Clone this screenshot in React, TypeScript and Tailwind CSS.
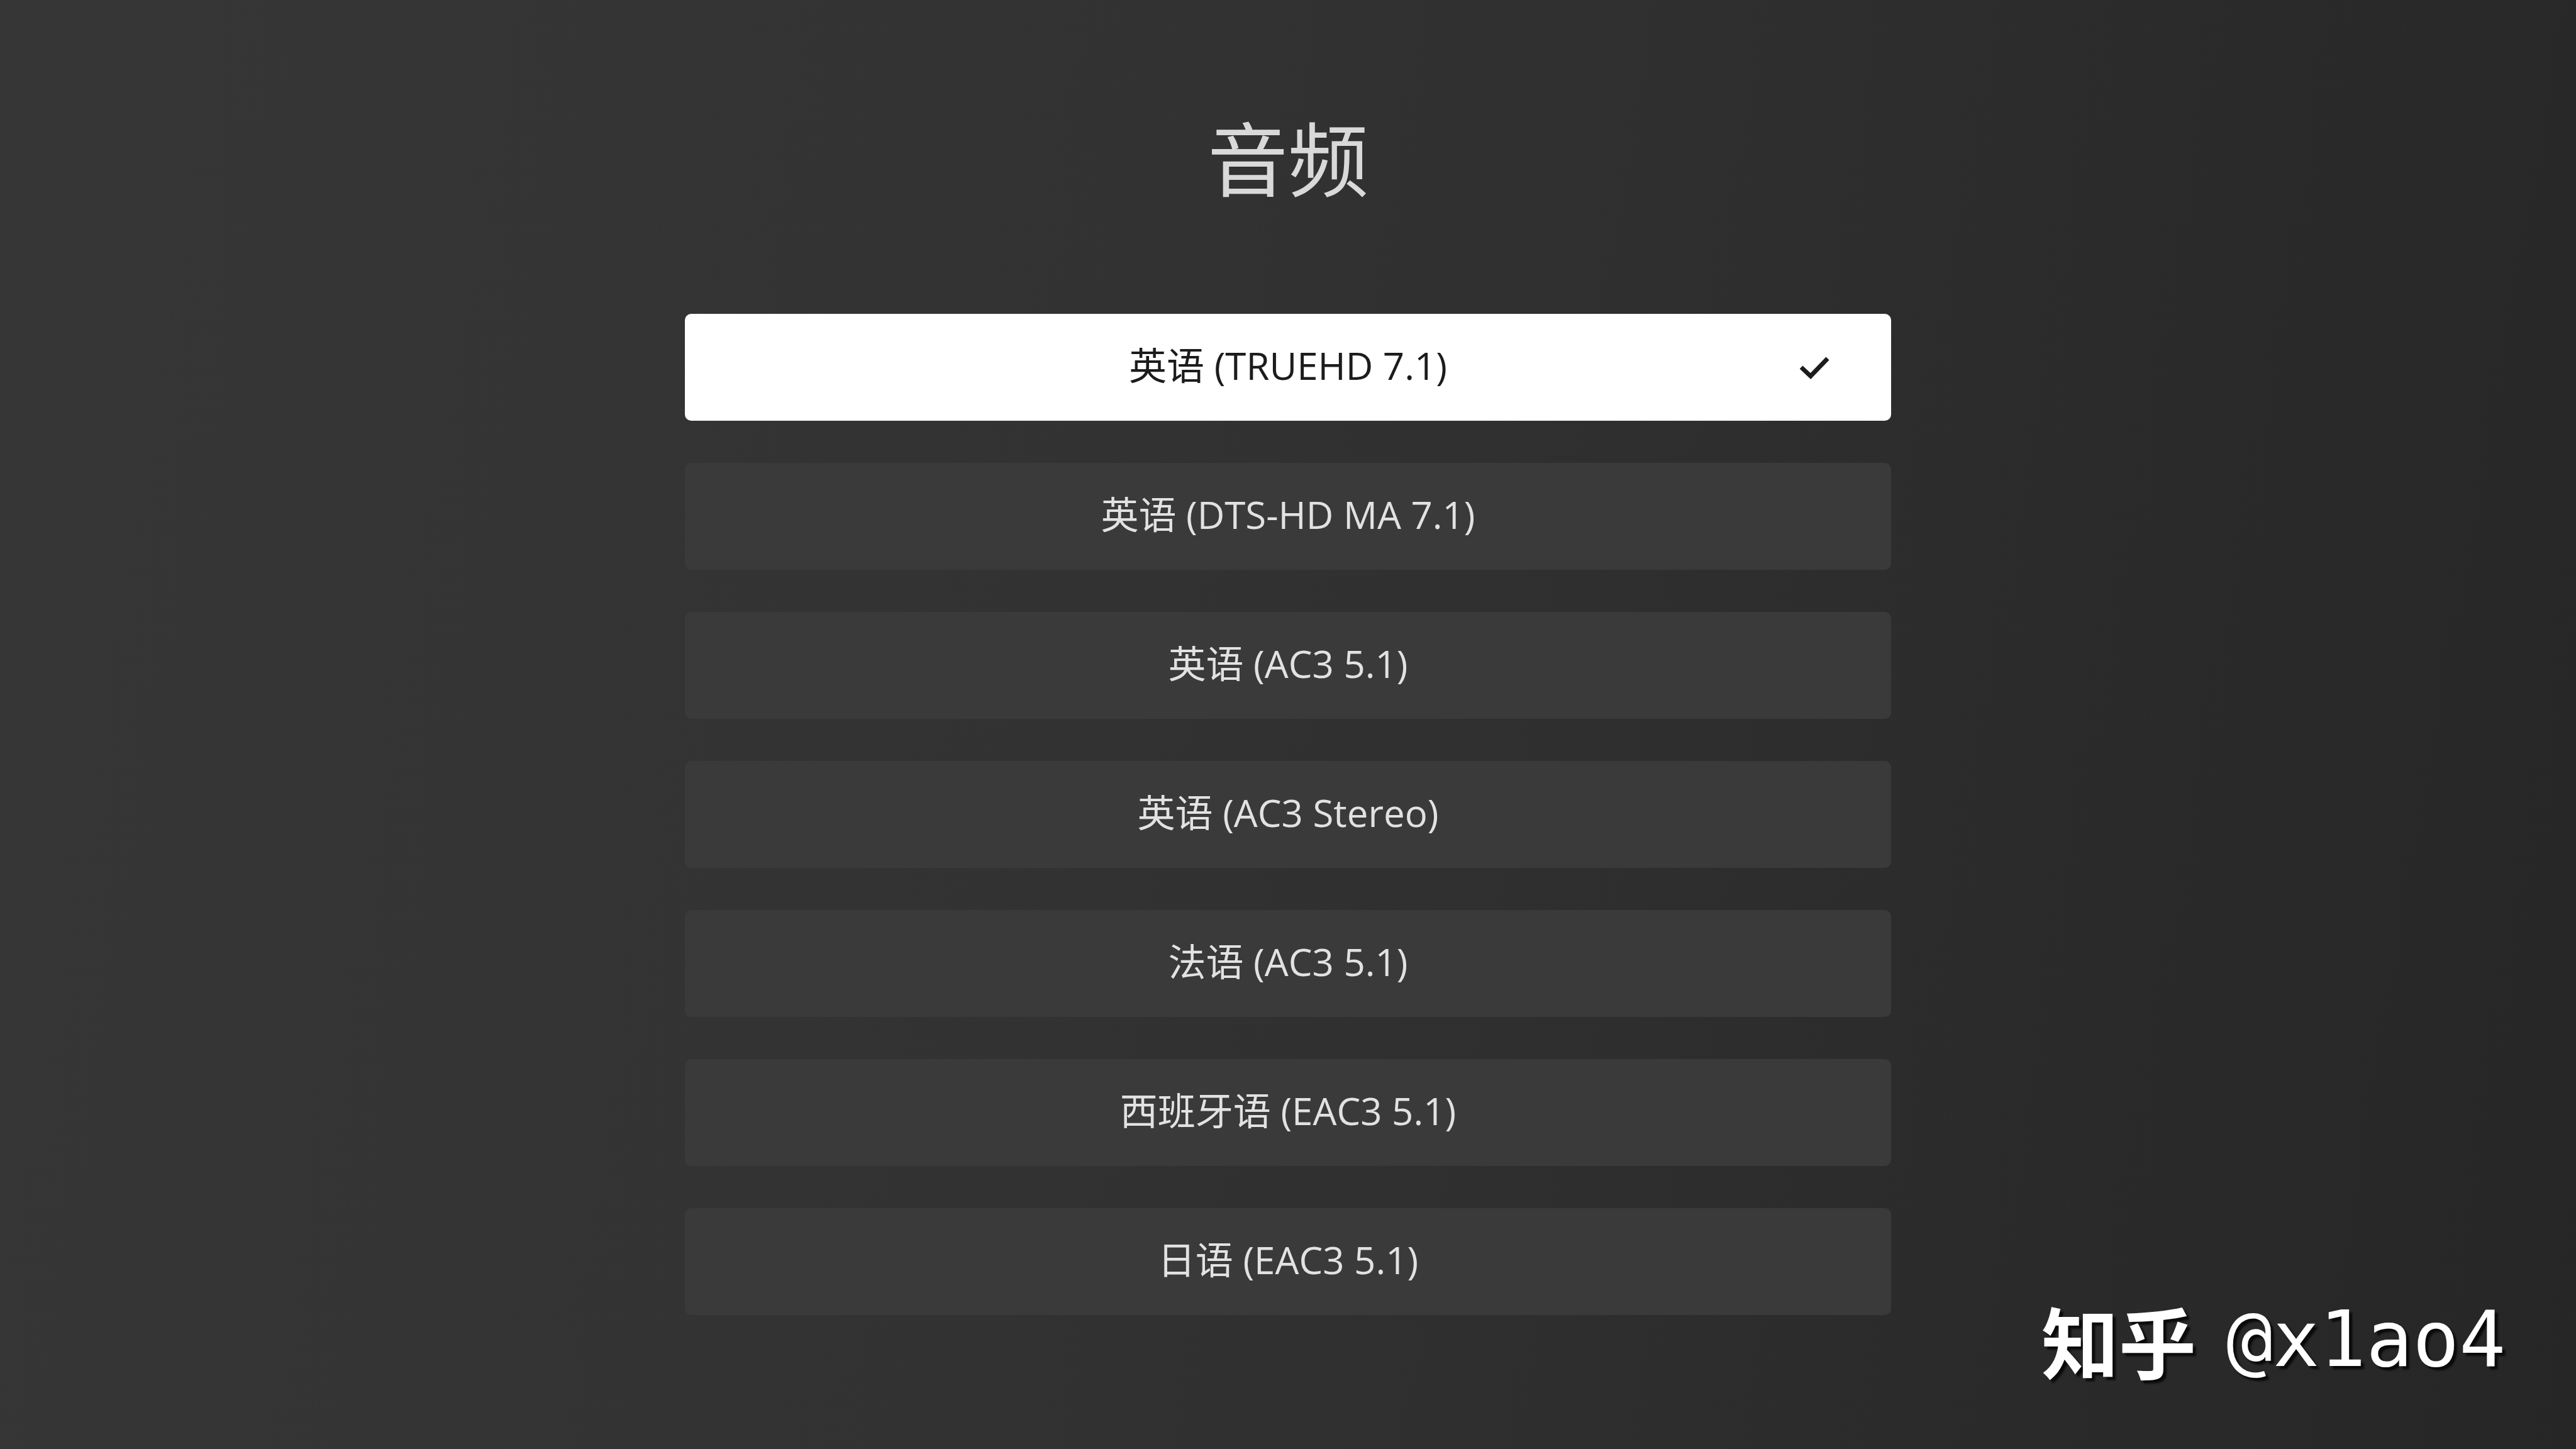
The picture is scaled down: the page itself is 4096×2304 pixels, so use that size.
const tracks = [
    { id: 1, label: "英语 (TRUEHD 7.1)", selected: true },
    { id: 2, label: "英语 (DTS-HD MA 7.1)" },
    { id: 3, label: "英语 (AC3 5.1)" },
    { id: 4, label: "英语 (AC3 Stereo)" },
    { id: 5, label: "法语 (AC3 5.1)" },
    { id: 6, label: "西班牙语 (EAC3 5.1)" },
    { id: 7, label: "日语 (EAC3 5.1)" },
];

function CheckMark() {
    return (
        <svg width="50" height="38" viewBox="0 0 50 38" fill="none">
            <polyline points="4,19 19,33 46,5" stroke="#1c1c1c" strokeWidth="7" strokeLinejoin="miter" />
        </svg>
    );
}

export default function App() {
    return (
        <div className="relative h-screen w-full overflow-hidden bg-[linear-gradient(100deg,#363636_0%,#323232_45%,#262626_100%)] font-['Open_Sans','Noto_Sans_CJK_SC',sans-serif]">
            <div className="flex flex-col items-center pt-[190px]">
                <h1 className="text-[128px] leading-none font-normal text-[#d9d9d9]">音频</h1>

                <div className="mt-[181px] flex w-[1918px] flex-col gap-[67px]">
                    {tracks.map((track) => (
                        <div
                            key={track.id}
                            className={`grid h-[170px] grid-cols-[1fr_auto_1fr] items-center rounded-[10px] px-[97px] ${track.selected ? "bg-white text-[#1c1c1c]" : "bg-[#3a3a3a] text-[#e2e2e2]"}`}
                        >
                            <div />
                            <span className="mb-[6px] text-[60px] leading-none">{track.label}</span>
                            <div className="flex justify-end">{track.selected && <CheckMark />}</div>
                        </div>
                    ))}
                </div>
            </div>

            {/* watermark */}
            <div className="absolute left-[3246px] top-[2068px] flex items-center text-[123px] leading-none font-bold text-white [text-shadow:5px_5px_3px_rgba(0,0,0,0.75)]">
                <span className="font-['Noto_Sans_CJK_SC',sans-serif]">知乎</span>
                <span className="ml-[48px] font-normal font-['DejaVu_Sans_Mono',monospace]">@x1ao4</span>
            </div>
        </div>
    );
}
